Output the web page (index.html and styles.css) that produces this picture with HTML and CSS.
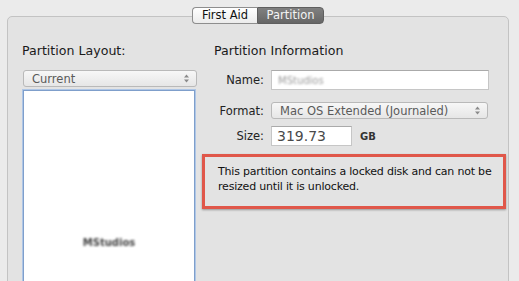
FILE: index.html
```html
<!DOCTYPE html>
<html lang="en">

<head>
   <meta charset="UTF-8">
   <meta name="viewport" content="width=device-width, initial-scale=1.0">
   <title>Disk Utility - Partition</title>
   <link rel="stylesheet" href="styles.css">
</head>

<body>
   <div class="window">
      <div class="tabs">
         <span class="tab">First Aid</span>
         <span class="tab active">Partition</span>
      </div>

      <div class="panel">
         <div class="layout">
            <h2>Partition Layout:</h2>
            <div class="popup">
               <span class="value">Current</span>
               <svg class="arrows" width="5" height="9" viewBox="0 0 5 9">
                  <path d="M2.5 0.5 L5 3.5 L0 3.5 Z M2.5 8.5 L5 5.5 L0 5.5 Z" fill="#8a8a8a" />
               </svg>
            </div>
            <div class="list">
               <span class="blur">MStudios</span>
            </div>
         </div>

         <div class="info">
            <h2>Partition Information</h2>
            <div class="row name-row">
               <label>Name:</label>
               <div class="field name"><span class="blur light">MStudios</span></div>
            </div>
            <div class="row format-row">
               <label>Format:</label>
               <div class="popup format">
                  <span class="value">Mac OS Extended (Journaled)</span>
                  <svg class="arrows" width="5" height="9" viewBox="0 0 5 9">
                     <path d="M2.5 0.5 L5 3.5 L0 3.5 Z M2.5 8.5 L5 5.5 L0 5.5 Z" fill="#8a8a8a" />
                  </svg>
               </div>
            </div>
            <div class="row size-row">
               <label>Size:</label>
               <div class="field size">319.73</div>
               <span class="unit">GB</span>
            </div>
            <div class="notice">
               This partition contains a locked disk and can not be resized until it is unlocked.
            </div>
         </div>
      </div>
   </div>
</body>

</html>
```

FILE: styles.css
```css
body {
   margin: 0;
   padding: 0;
   width: 519px;
   height: 281px;
   overflow: hidden;
   background-color: #ebebeb;
   font-family: 'DejaVu Sans', 'Liberation Sans', sans-serif;
   color: #1e1e1e;
}

.window {
   padding-top: 7px;
}

/* segmented control */
.tabs {
   display: flex;
   justify-content: center;
   position: relative;
   z-index: 1;
   height: 17px;
   margin-left: -3px;
}

.tab {
   font-size: 11.5px;
   line-height: 15px;
   width: 64px;
   white-space: nowrap;
   text-align: center;
   border: 1px solid #8e8e8e;
   background: linear-gradient(#ffffff, #ececec);
   color: #111;
}

.tab:first-child {
   border-radius: 4px 0 0 4px;
   border-right: none;
}

.tab.active {
   width: 65px;
   border-radius: 0 4px 4px 0;
   border-color: #5f5f5f;
   background: linear-gradient(#808080, #666666);
   color: #f4f4f4;
}

/* main box */
.panel {
   margin: -8px 0 0 7px;
   width: 502px;
   height: 290px;
   border: 1px solid #c3c3c3;
   border-radius: 5px;
   background-color: #e3e3e3;
   display: flex;
   padding: 26px 0 0 14px;
   box-sizing: border-box;
}

h2 {
   font-size: 12.6px;
   font-weight: normal;
   line-height: 16px;
   margin: 0;
   color: #1a1a1a;
}

.layout {
   width: 175px;
}

.popup {
   display: flex;
   align-items: center;
   justify-content: space-between;
   height: 15px;
   margin: 11px 0 0 1px;
   padding: 0 7px 0 8px;
   border: 1px solid #b9b9b9;
   border-radius: 3px;
   background: linear-gradient(#f7f7f7, #e6e6e6);
   font-size: 11.5px;
   color: #5a5a5a;
}

.list {
   margin: 3px 0 0 1px;
   width: 172px;
   height: 200px;
   border: 1px solid #7f9fcb;
   box-shadow: 0 0 0 1px #aec6e6;
   background-color: #fff;
   text-align: center;
   padding-top: 140px;
   box-sizing: border-box;
}

.blur {
   font-size: 10px;
   font-weight: bold;
   color: #444;
   filter: blur(1.2px);
}

.blur.light {
   color: #9a9a9a;
   font-weight: normal;
}

.info {
   margin-left: 17px;
   width: 292px;
}

.row {
   display: flex;
   align-items: center;
   gap: 7px;
}

.row label {
   width: 50px;
   text-align: right;
   font-size: 11.5px;
   color: #222;
}

.name-row {
   margin-top: 11px;
}

.format-row {
   margin-top: 12px;
}

.size-row {
   margin-top: 7px;
}

.field {
   height: 18px;
   border: 1px solid #c6c6c6;
   border-top-color: #aaa;
   background-color: #fff;
   display: flex;
   align-items: center;
   padding-left: 6px;
   box-sizing: content-box;
}

.name {
   width: 210px;
}

.format {
   margin: 0;
   width: 200px;
}

.size {
   width: 74px;
   font-size: 14px;
   color: #4a4a4a;
   padding-left: 5px;
}

.unit {
   font-size: 10px;
   font-weight: bold;
   color: #333;
   margin-left: 1px;
}

.notice {
   margin: 8px 0 0 -12px;
   width: 304px;
   border: 3px solid #e0574a;
   box-shadow: 0 1px 2px rgba(0, 0, 0, 0.35);
   padding: 7px 0 12px 13px;
   box-sizing: border-box;
   font-size: 11px;
   letter-spacing: -0.2px;
   line-height: 15px;
   color: #111;
}
```
